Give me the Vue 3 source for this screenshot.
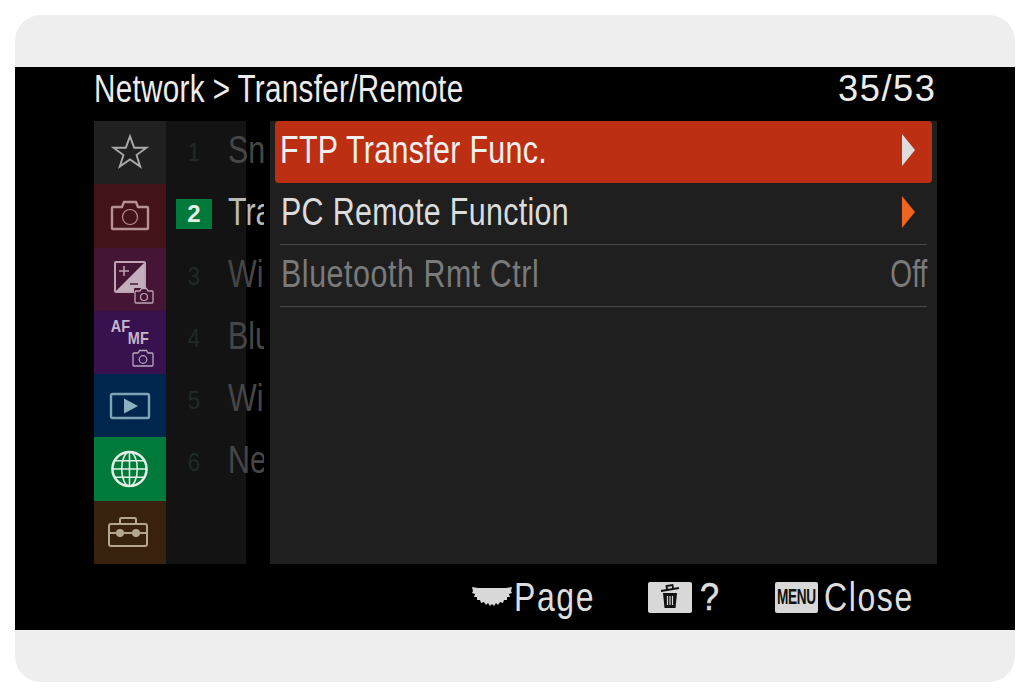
<template>
  <div class="page">
    <div class="card">
      <div class="screen">
        <header class="top-bar">
          <span class="squeeze title">Network &gt; Transfer/Remote</span>
          <span class="squeeze-right count">35/53</span>
        </header>

        <div class="menu">
          <nav class="tabs">
            <div class="tab tab-star">
              <svg width="38" height="36" viewBox="0 0 40 38" fill="none" stroke="#a9a9a9" stroke-width="2">
                <path d="M20 3.5l4.4 12h13l-10.500 7.800 3.900 12.200-10.800-7.500-10.800 7.500 3.900-12.200-10.500-7.800h13z" />
              </svg>
            </div>
            <div class="tab tab-camera">
              <svg width="40" height="32" viewBox="0 0 40 32" fill="none" stroke="#b79091" stroke-width="2.400">
                <path d="M3 8h9l2-5h12l2 5h9a1 1 0 0 1 1 1v20a1 1 0 0 1-1 1H3a1 1 0 0 1-1-1V9a1 1 0 0 1 1-1z" />
                <circle cx="20" cy="18" r="7.500" stroke-width="1.200" />
              </svg>
            </div>
            <div class="tab tab-exposure">
              <svg width="46" height="46" viewBox="0 0 46 46" fill="none">
                <rect x="2" y="2" width="30" height="30" rx="1" stroke="#bda5b5" stroke-width="2" />
                <path d="M31 3v28H3z" fill="#c3afbd" />
                <path d="M6 11h10M11 6v10" stroke="#bda5b5" stroke-width="1.500" />
                <path d="M17 24h8" stroke="#4a1a38" stroke-width="1.500" />
                <rect x="21" y="28" width="21" height="16" rx="1" fill="#451536" />
                <path d="M23 31h4l1.500-2.500h5L35 31h4a1 1 0 0 1 1 1v10a1 1 0 0 1-1 1H23a1 1 0 0 1-1-1V32a1 1 0 0 1 1-1z" stroke="#bda5b5" stroke-width="1.300" />
                <circle cx="31" cy="37" r="3.500" stroke="#bda5b5" stroke-width="1.200" />
              </svg>
            </div>
            <div class="tab tab-focus">
              <span class="af">AF</span>
              <span class="mf">MF</span>
              <svg class="mini-camera" width="24" height="18" viewBox="0 0 24 18" fill="none" stroke="#b8a7bf" stroke-width="1.300">
                <path d="M3 4h4l1.500-2.500h7L17 4h4a1 1 0 0 1 1 1v11a1 1 0 0 1-1 1H3a1 1 0 0 1-1-1V5a1 1 0 0 1 1-1z" />
                <circle cx="12" cy="10.500" r="3.800" stroke-width="1.200" />
              </svg>
            </div>
            <div class="tab tab-play">
              <svg width="42" height="28" viewBox="0 0 42 28" fill="none">
                <rect x="2" y="2" width="38" height="24" rx="1.500" stroke="#7fa3b4" stroke-width="2.400" />
                <path d="M15 6.500v15l14-7.500z" fill="#8fb0c0" />
              </svg>
            </div>
            <div class="tab tab-network">
              <svg width="39" height="38" viewBox="0 0 40 38" fill="none" stroke="#e4efe6" stroke-width="1.600">
                <circle cx="20" cy="19" r="17.500" stroke-width="2.600" />
                <ellipse cx="20" cy="19" rx="8" ry="17.500" />
                <path d="M20 1.500v35M2.500 19h35M5 10.500h30M5 27.500h30" />
              </svg>
            </div>
            <div class="tab tab-setup">
              <svg width="42" height="32" viewBox="0 0 42 32" fill="none" stroke="#b5a68e" stroke-width="2">
                <path d="M13 8V3.500A1.500 1.500 0 0 1 14.500 2h13A1.500 1.500 0 0 1 29 3.500V8" />
                <rect x="2" y="8" width="38" height="22" rx="2" />
                <path d="M2 17h38" />
                <circle cx="13" cy="17" r="4" fill="#b5a68e" stroke="none" />
                <circle cx="29" cy="17" r="4" fill="#b5a68e" stroke="none" />
              </svg>
            </div>
          </nav>

          <div class="pages">
            <div
              v-for="item in pages"
              :key="item.num"
              class="page-row"
              :class="{ current: item.num === 2 }"
            >
              <span class="page-num">{{ item.num }}</span>
              <span class="page-name">{{ item.name }}</span>
            </div>
          </div>

          <div class="panel">
            <div
              v-for="row in rows"
              :key="row.label"
              class="row"
              :class="{ selected: row.selected, disabled: row.disabled }"
            >
              <span class="squeeze row-label">{{ row.label }}</span>
              <span v-if="row.value" class="squeeze-right row-value">{{ row.value }}</span>
              <span v-else class="arrow"></span>
            </div>
          </div>
        </div>

        <footer class="bottom-bar">
          <div class="hint hint-page">
            <svg width="40" height="24" viewBox="0 0 40 24" fill="#d8d8d8">
              <path d="M0 2l6 1h28l6-1-1 4 1 2-3 1 1 3-3 0 0 3-3 0-1 3-3-1-2 3-2-2-2 3-2-2-2 2-2-3-2 2-2-3-3 1-1-3-3 0 0-3-3 0 1-3-3-1 1-2z" />
            </svg>
            <span class="squeeze footer-text page-text">Page</span>
          </div>
          <div class="hint hint-help">
            <span class="key key-trash">
              <svg width="20" height="26" viewBox="0 0 20 26" fill="none" stroke="#111" stroke-width="2">
                <path d="M1 7l18-3M7 5l-.5-3 6-1 .5 3" stroke-width="1.800" />
                <path d="M3 9h14l-1.500 15h-11z" fill="#111" stroke="none" />
                <path d="M7.500 12v9M10 12v9M12.500 12v9" stroke="#d8d8d8" stroke-width="1.200" />
              </svg>
            </span>
            <span class="question">?</span>
          </div>
          <div class="hint hint-close">
            <span class="key key-menu"><span class="menu-word">MENU</span></span>
            <span class="squeeze footer-text close-text">Close</span>
          </div>
        </footer>
      </div>
    </div>
  </div>
</template>

<script setup>
const pages = [
  { num: 1, name: "Sn" },
  { num: 2, name: "Tra" },
  { num: 3, name: "Wi" },
  { num: 4, name: "Blu" },
  { num: 5, name: "Wi" },
  { num: 6, name: "Ne" },
];

const rows = [
  { label: "FTP Transfer Func.", selected: true },
  { label: "PC Remote Function" },
  { label: "Bluetooth Rmt Ctrl", value: "Off", disabled: true },
];
</script>

<style scoped>
.page {
  width: 1030px;
  height: 697px;
  padding: 15px;
  box-sizing: border-box;
  background: #fff;
  font-family: "Liberation Sans", Arial, sans-serif;
}

.card {
  width: 1000px;
  height: 667px;
  padding: 52px 0;
  box-sizing: border-box;
  border-radius: 26px;
  background: #eee;
}

.screen {
  height: 563px;
  padding: 0 78px 0 79px;
  display: flex;
  flex-direction: column;
  background: #000;
}

.squeeze,
.squeeze-right {
  display: inline-block;
  white-space: nowrap;
  transform: scaleX(0.78);
  transform-origin: left center;
  letter-spacing: 0.4px;
}

.squeeze-right {
  transform-origin: right center;
}

.top-bar {
  height: 54px;
  box-sizing: border-box;
  padding-bottom: 10px;
  flex: none;
  display: flex;
  justify-content: space-between;
  align-items: center;
  color: #ececec;
  font-size: 38px;
}

.title {
  width: 400px;
  word-spacing: -1px;
}

.count {
  transform: scaleX(0.98);
  font-size: 37px;
  letter-spacing: 1.600px;
}

.menu {
  height: 443px;
  flex: none;
  display: flex;
}

.tabs {
  width: 72px;
  flex: none;
  display: grid;
  grid-template-rows: repeat(7, 1fr);
}

.tab {
  position: relative;
  display: flex;
  align-items: center;
  justify-content: center;
}

.tab-star { background: #202020; }
.tab-camera { background: #431317; }
.tab-exposure { background: #451536; }
.tab-focus { background: #38124f; }
.tab-play { background: #00264d; }
.tab-network { background: #007a3a; }
.tab-setup { background: #38220e; }

.tab-star svg { margin-bottom: 4px; }
.tab-camera svg { margin-bottom: 2px; }
.tab-exposure svg { margin: 8px 0 0 12px; }
.tab-network svg { margin-right: 2px; }
.tab-setup svg { margin-right: 4px; }

.af,
.mf {
  position: absolute;
  color: #c5b6cb;
  font-size: 17px;
  font-weight: 700;
  transform: scaleX(0.85);
}

.af { left: 15px; top: 6px; }
.mf { left: 32px; top: 18px; }

.mini-camera {
  position: absolute;
  left: 37px;
  top: 38px;
}

.pages {
  width: 98px;
  margin-right: 6px;
  flex: none;
  overflow: hidden;
  background: linear-gradient(to right, #131313 80px, #000 80px);
}

.page-row {
  height: 62px;
  padding-left: 10px;
  display: flex;
  align-items: center;
  color: #464646;
  font-size: 39px;
}

.page-num {
  width: 36px;
  height: 30px;
  flex: none;
  margin-right: 16px;
  display: flex;
  align-items: center;
  justify-content: center;
  color: #1f2b24;
  font-size: 26px;
  transform: scaleX(0.85);
}

.page-name {
  white-space: nowrap;
  display: inline-block;
  margin-bottom: 5px;
  transform: scaleX(0.78);
  transform-origin: left center;
}

.current {
  color: #b9b9b9;
}

.current .page-num {
  background: #007a3a;
  color: #e6efe8;
  transform: none;
  font-size: 24px;
  font-weight: 700;
}

.panel {
  flex: 1;
  min-width: 0;
  background: #1f1f1f;
}

.row {
  height: 62px;
  margin: 0 10px;
  padding: 0 0 4px 1px;
  box-sizing: border-box;
  display: flex;
  align-items: center;
  justify-content: space-between;
  color: #dcdcdc;
  font-size: 39px;
  border-bottom: 1px solid #4a4a4a;
}

.row-label {
  width: 500px;
}

.row-value {
  transform: scaleX(0.72);
  letter-spacing: 0;
}

.selected {
  margin: 0 5px;
  padding: 0 5px 4px 5px;
  border-bottom: 0;
  border-radius: 4px;
  background: #bd2f13;
  color: #f0f0f0;
}

.disabled {
  color: #7a7a7a;
}

.disabled .row-label {
  letter-spacing: 0.7px;
}

.arrow {
  width: 0;
  height: 0;
  margin-right: 12px;
  border-left: 13px solid #ee6420;
  border-top: 16px solid transparent;
  border-bottom: 16px solid transparent;
}

.selected .arrow {
  border-left-color: #dddddd;
}

.bottom-bar {
  flex: 1;
  position: relative;
  display: flex;
  align-items: center;
  color: #dedede;
}

.hint {
  display: flex;
  align-items: center;
}

.hint-page { margin-left: 378px; width: 176px; }
.hint-help { width: 127px; }

.footer-text {
  font-size: 40px;
  letter-spacing: 2px;
  transform: scaleX(0.8);
}

.page-text { margin-left: 2px; }
.close-text { margin-left: 6px; }

.key {
  height: 31px;
  display: flex;
  align-items: center;
  justify-content: center;
  border-radius: 2px;
  background: #d8d8d8;
}

.key-trash { width: 44px; }
.key-menu { width: 43px; overflow: hidden; }

.question {
  margin-left: 7px;
  font-size: 38px;
  transform: scaleX(0.9);
  -webkit-text-stroke: 0.6px #dedede;
}

.menu-word {
  color: #111;
  font-size: 22px;
  font-weight: 700;
  transform: scaleX(0.62);
  letter-spacing: -0.5px;
}
</style>

<style>
html,
body {
  margin: 0;
  background: #fff;
}
</style>
